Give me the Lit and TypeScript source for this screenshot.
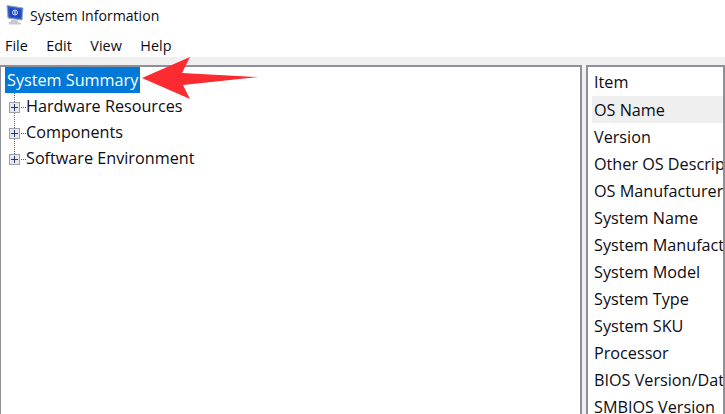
import { LitElement, html, css, svg } from "lit";
import { customElement } from "lit/decorators.js";

const TREE = ["Hardware Resources", "Components", "Software Environment"];
const ITEMS = ["OS Name", "Version", "Other OS Description", "OS Manufacturer", "System Name", "System Manufacturer", "System Model", "System Type", "System SKU", "Processor", "BIOS Version/Date", "SMBIOS Version"];

@customElement("app-root")
export class AppRoot extends LitElement {
  static styles = css`
    :host { display: block; width: 725px; height: 414px; overflow: hidden; position: relative; background: #fff; font-family: "Open Sans", "Noto Sans", sans-serif; font-size: 16.2px; color: #0c0c14; }
    .title { height: 31px; display: flex; align-items: center; gap: 6px; padding-left: 6px; font-size: 14.1px; }
    .title svg { display: block; margin-top: 1px; }
    .menu { height: 26px; box-sizing: border-box; padding: 2px 0 0 5px; display: flex; gap: 18.5px; align-items: center; font-size: 14.4px; }
    .body { height: 357px; background: #f0f0f0; padding-top: 8px; display: flex; gap: 4px; box-sizing: border-box; }
    .pane { background: #fff; border: 2px solid #8f8f99; border-bottom: none; box-sizing: border-box; overflow: hidden; }
    .left { width: 582px; border-left-width: 1px; padding: 0 0 0 4px; }
    .right { flex: 1; padding: 2px 0 0 4px; }
    .sel { display: inline-block; vertical-align: top; background: #0078d7; color: #fff; height: 26px; line-height: 26px; padding: 0 2px 0 2px; }
    .tree-row { height: 26px; display: flex; align-items: center; margin-left: -1px; }
    .tree-row svg { display: block; flex: none; }
    .row { height: 27px; line-height: 29px; white-space: nowrap; padding-left: 2px; }
    .row.head { line-height: 27px; }
    .row.first { background: #efefef; }
    .arrow { position: absolute; left: 0; top: 0; pointer-events: none; }
  `;

  private plus(i: number) {
    return html`<svg width="22" height="26" viewBox="0 0 22 26">
      <path d="M10.5 0V${i === 2 ? 10 : 26}" stroke="#666" stroke-dasharray="1 1" fill="none"/>
      <path d="M15 14.500H22" stroke="#666" stroke-dasharray="1 1" fill="none"/>
      <rect x="5.500" y="9.500" width="10" height="10" fill="#e6e8f0" stroke="#a0a0a0"/>
      <path d="M7 14.500H14M10.500 11V18" stroke="#27336a" fill="none"/>
    </svg>`;
  }

  render() {
    return html`
      <div class="title">
        <svg width="18" height="22" viewBox="0 0 18 22">
          <path d="M1 .5L17 3L16 15L2 13Z" fill="#2d5cc4" stroke="#9aa6bc" stroke-width="1"/>
          <path d="M3.500 3L14.500 5V13L4 11.500Z" fill="#1b45c0"/>
          <circle cx="9" cy="7.500" r="2.500" fill="none" stroke="#dfe8ff"/>
          <path d="M9 6V9" stroke="#fff"/>
          <path d="M5 14.500L12 15.500V17L15 18V19.500H3V17L5 16.500Z" fill="#c6cacd"/>
        </svg>
        <span>System Information</span>
      </div>
      <div class="menu"><span>File</span><span>Edit</span><span>View</span><span>Help</span></div>
      <div class="body">
        <div class="pane left">
          <div class="sel">System Summary</div>
          ${TREE.map((t, i) => html`<div class="tree-row">${this.plus(i)}<span>${t}</span></div>`)}
        </div>
        <div class="pane right">
          <div class="row head">Item</div>
          ${ITEMS.map((t, i) => html`<div class="row ${i === 0 ? "first" : ""}">${t}</div>`)}
        </div>
      </div>
      <svg class="arrow" width="725" height="414" viewBox="0 0 725 414">
        ${svg`<path d="M142 78L190 57L182 73L258 77L183 85L190 99Z" fill="#fb2b30"/>`}
      </svg>
    `;
  }
}
